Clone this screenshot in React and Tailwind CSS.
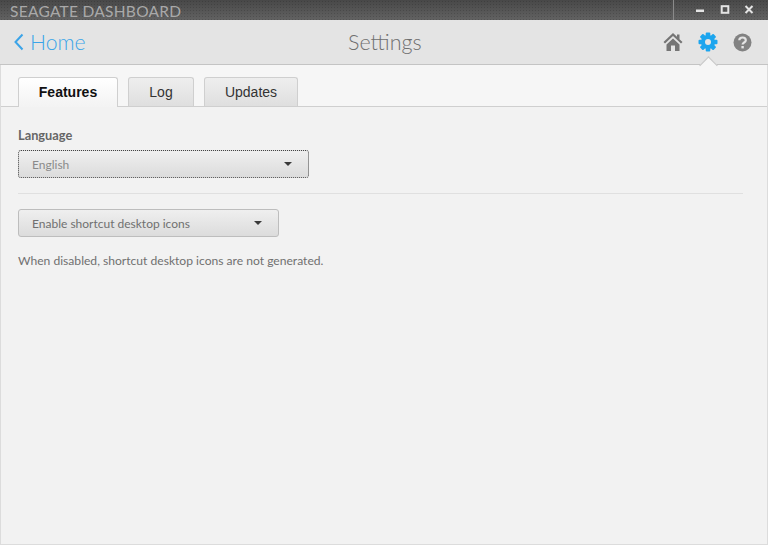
import React from "react";

function Caret() {
  return <span className="w-0 h-0 border-x-[4.5px] border-x-transparent border-t-[4px] border-t-[#3a3a3a]" />;
}

function Select({ label, focused, width }) {
  return (
    <div className={`${width} h-[28px] flex items-center justify-between pl-[13px] pr-[16px] rounded-[3px] bg-gradient-to-b from-[#efefef] to-[#dcdcdc] text-[12px] ${focused ? "border border-dotted border-[#444] text-[#8a8a8a]" : "border border-[#bdbdbd] text-[#707070]"}`}>
      <span className="pt-[2px]">{label}</span>
      <Caret />
    </div>
  );
}

function Tab({ label, active, width }) {
  const base = "flex items-center justify-center rounded-t-[3px] border border-b-0 border-[#cfcfcf] text-[14px] font-['Liberation_Sans',sans-serif]";
  return active ? (
    <div className={`${base} ${width} h-[30px] -mb-px bg-gradient-to-b from-white to-[#f3f3f3] font-bold text-[#111]`}>{label}</div>
  ) : (
    <div className={`${base} ${width} h-[29px] bg-gradient-to-b from-[#eeeeee] to-[#dfdfdf] text-[#333]`}>{label}</div>
  );
}

export default function App() {
  return (
    <div className="w-[768px] h-[545px] flex flex-col overflow-hidden bg-[#f2f2f2] font-['Lato',sans-serif]">
      <div className="h-[20px] shrink-0 flex items-center justify-between bg-[radial-gradient(#00000026_1px,transparent_1px),linear-gradient(#484848,#626262)] bg-[length:3px_3px,100%_100%]">
        <span className="pl-[10px] pt-px text-[15.5px] leading-[20px] text-[#a9a9a9] tracking-[0.28px]">SEAGATE DASHBOARD</span>
        <div className="flex items-center h-full">
          <div className="w-px h-full bg-[#8a8a8a]" />
          <div className="flex items-center pl-[21px] pr-[14px]">
            <svg width="10" height="10" viewBox="0 0 10 10"><rect x="1" y="4.5" width="8" height="2.5" fill="#e4e4e4" /></svg>
            <svg className="ml-[15px]" width="10" height="10" viewBox="0 0 10 10"><rect x="1.7" y="1.2" width="6.6" height="6.6" fill="none" stroke="#e4e4e4" strokeWidth="2" /></svg>
            <svg className="ml-[14px]" width="10" height="10" viewBox="0 0 10 10"><path d="M1.5 1 L8.5 8 M8.5 1 L1.5 8" stroke="#e4e4e4" strokeWidth="2" /></svg>
          </div>
        </div>
      </div>

      <div className="relative h-[45px] shrink-0 flex items-center justify-between bg-[#e4e4e4] border-b border-[#c4c4c4]">
        <div className="flex items-center gap-[6px] pl-[14px] text-[#3ba4e8]">
          <svg width="10" height="18" viewBox="0 0 10 18" fill="none"><path d="M8.5 1.5 L1.5 9 L8.5 16.5" stroke="#3ba4e8" strokeWidth="2" /></svg>
          <span className="text-[21.2px] leading-[30px] font-light">Home</span>
        </div>
        <span className="absolute left-[348px] top-[8px] text-[21.5px] leading-[28px] font-light text-[#6f6f6f]">Settings</span>
        <div className="flex items-center gap-[15px] pr-[16px]">
          <svg width="20" height="20" viewBox="0 0 20 20" fill="#757575">
            <path d="M10 1 L0.5 10 L2 11.5 L10 4 L18 11.5 L19.5 10 L16.5 7.2 V2.5 H14 V4.8 Z" />
            <path d="M3.5 12.5 L10 6.5 L16.5 12.5 V19 H12 V13.5 H8 V19 H3.5 Z" />
          </svg>
          <svg width="20" height="20" viewBox="0 0 20 20">
            <g fill="#1ca5ee">
              <circle cx="10" cy="10" r="7" />
              <rect x="7.7" y="0.5" width="4.6" height="19" rx="1" />
              <rect x="7.7" y="0.5" width="4.6" height="19" rx="1" transform="rotate(45 10 10)" />
              <rect x="7.7" y="0.5" width="4.6" height="19" rx="1" transform="rotate(90 10 10)" />
              <rect x="7.7" y="0.5" width="4.6" height="19" rx="1" transform="rotate(135 10 10)" />
            </g>
            <circle cx="10" cy="10" r="3" fill="#e4e4e4" />
          </svg>
          <svg width="19" height="19" viewBox="0 0 19 19">
            <circle cx="9.5" cy="9.5" r="9" fill="#828282" />
            <path d="M6.3 7.2 C6.4 3.6 12.8 3.6 12.8 7.2 C12.8 9.5 9.6 9.4 9.6 11.5" fill="none" stroke="#e4e4e4" strokeWidth="2.2" />
            <rect x="8.4" y="13" width="2.4" height="2.4" fill="#e4e4e4" />
          </svg>
        </div>
        <span className="absolute left-[702px] top-[38.5px] w-[13px] h-[13px] rotate-45 bg-[#f6f6f6] border-l border-t border-[#c4c4c4]" />
      </div>

      <div className="flex-1 flex flex-col border-x border-b border-[#dcdcdc] bg-[#f2f2f2]">
        <div className="flex items-end gap-[10px] h-[42px] pl-[17px] border-b border-[#cfcfcf] bg-[#f6f6f6]">
          <Tab label="Features" active width="w-[100px]" />
          <Tab label="Log" width="w-[66px]" />
          <Tab label="Updates" width="w-[94px]" />
        </div>
        <div className="flex flex-col pl-[17px] pr-[24px]">
          <span className="mt-[21px] text-[12.8px] leading-[15px] font-bold text-[#666]">Language</span>
          <div className="mt-[7px]"><Select label="English" focused width="w-[291px]" /></div>
          <div className="mt-[15px] h-px bg-[#e0e0e0]" />
          <div className="mt-[15px]"><Select label="Enable shortcut desktop icons" width="w-[261px]" /></div>
          <p className="mt-[15px] text-[12.1px] leading-[18px] text-[#707070]">When disabled, shortcut desktop icons are not generated.</p>
        </div>
      </div>
    </div>
  );
}
